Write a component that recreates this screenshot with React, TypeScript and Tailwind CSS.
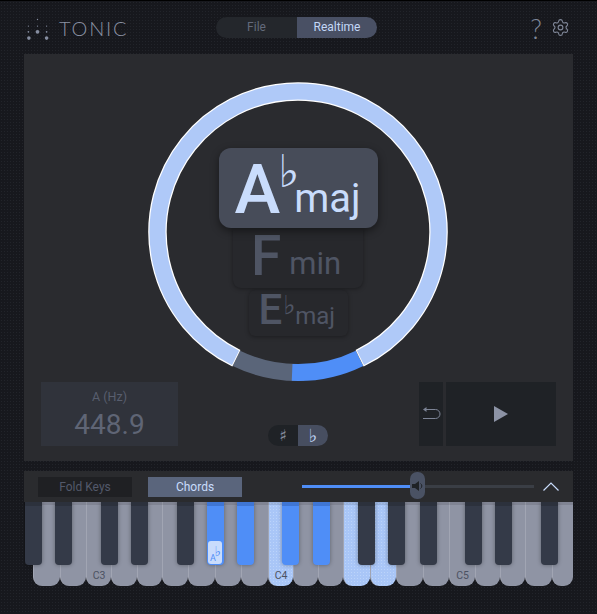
import React from "react";

const whiteWidths = [27, 26, 25, 26, 25, 26, 27, 26, 27, 25, 25, 25, 27, 26, 27, 26, 26, 25, 25, 27, 21];
const whiteLabels: Record<number, string> = { 2: "C3", 9: "C4", 16: "C5" };
const whiteActive = [9, 12, 13];
const blackKeys: [number, boolean][] = [
  [25, false], [55, false], [101, false], [131, false], [177, false], [207, true], [237, true], [282, true], [313, true],
  [358, false], [388, false], [420, false], [465, false], [495, false], [541, false],
];

function polar(deg: number, r = 140.5) {
  const a = (deg * Math.PI) / 180;
  return [150 + r * Math.sin(a), 150 + r * Math.cos(a)];
}
function arc(from: number, to: number) {
  const [x1, y1] = polar(from);
  const [x2, y2] = polar(to);
  const large = Math.abs(to - from) > 180 ? 1 : 0;
  return `M${x1} ${y1}A140.5 140.5 0 ${large} ${to > from ? 0 : 1} ${x2} ${y2}`;
}

function Ring() {
  return (
    <svg width="300" height="300" viewBox="0 0 300 300" className="block">
      <path d={arc(-26, 2.4)} fill="none" stroke="#5a6579" strokeWidth="17" />
      <path d={arc(-2.4, 26)} fill="none" stroke="#4f8ef7" strokeWidth="17" />
      <path d={arc(26, 334)} fill="none" stroke="#ffffff" strokeWidth="18.5" />
      <path d={arc(26.4, 333.6)} fill="none" stroke="#afc9f8" strokeWidth="16" />
    </svg>
  );
}

function Flat({ className }: { className: string }) {
  return <span className={`font-['DejaVu_Sans',sans-serif] leading-none ${className}`}>♭</span>;
}

export default function App() {
  return (
    <div className="w-[597px] h-[614px] overflow-hidden bg-[#17181d] bg-[radial-gradient(#22242a_1px,transparent_1px)] bg-[size:3px_3px] border-t border-black font-['Roboto',sans-serif] text-[12px]">
      <header className="h-[53px] px-[24px] flex items-center relative">
        <div className="flex items-center gap-[10px] w-[192px] pl-[2px]">
          <svg width="23" height="24" viewBox="0 0 24 24" className="text-[#868da0]" fill="currentColor">
            <circle cx="12" cy="3" r="0.7" />
            <circle cx="2.5" cy="10" r="0.7" /><circle cx="12" cy="10" r="0.7" /><circle cx="21.5" cy="10" r="0.7" />
            <circle cx="2.5" cy="16" r="0.9" /><circle cx="12" cy="16" r="2" /><circle cx="21.5" cy="16" r="0.9" />
            <circle cx="3" cy="22.5" r="1.9" /><circle cx="21.5" cy="22.5" r="1.9" />
          </svg>
          <span className="font-['Lato',sans-serif] font-light text-[20px] tracking-[1.8px] text-[#8a91a3] leading-none">TONIC</span>
        </div>
        <div className="flex h-[21px] w-[161px] leading-[21px] text-center">
          <div className="w-[81px] rounded-l-full bg-[#24272c] text-[#636a7b]">File</div>
          <div className="w-[80px] rounded-r-full bg-[#495064] text-[#c3d7f7]">Realtime</div>
        </div>
        <div className="ml-auto flex items-center gap-[9px] pr-[3px]">
          <span className="font-['Lato',sans-serif] font-light text-[27px] leading-none text-[#7f8697] mt-[1px]">?</span>
          <svg width="19" height="19" viewBox="0 0 24 24" fill="none" stroke="#7f8697" strokeWidth="1.4" strokeLinecap="round" strokeLinejoin="round">
            <path d="M9.671 4.136a2.34 2.34 0 0 1 4.659 0 2.34 2.34 0 0 0 3.319 1.915 2.34 2.34 0 0 1 2.33 4.033 2.34 2.34 0 0 0 0 3.831 2.34 2.34 0 0 1-2.33 4.033 2.34 2.34 0 0 0-3.319 1.915 2.34 2.34 0 0 1-4.659 0 2.34 2.34 0 0 0-3.32-1.915 2.34 2.34 0 0 1-2.33-4.033 2.34 2.34 0 0 0 0-3.831A2.34 2.34 0 0 1 6.35 6.051a2.34 2.34 0 0 0 3.319-1.915" />
            <circle cx="12" cy="12" r="3" />
          </svg>
        </div>
      </header>

      <main className="mx-[24px] w-[549px] h-[407px] bg-[#2a2b2f] pt-[28px] px-[17px]">
        <div className="relative w-[300px] h-[300px] ml-[107px]">
          <Ring />
          <div className="absolute inset-x-0 top-[66px] flex flex-col items-center">
            <div className="relative z-20 w-[159px] h-[80px] rounded-[12px] bg-[#474c59] shadow-[0_3px_8px_rgba(0,0,0,0.45)] text-[#c9dcfc] flex items-start pl-[16px]">
              <span className="font-medium text-[69px] leading-[80px] mt-[2px]">A</span>
              <Flat className="text-[45px] mt-[1px] w-[14px] ml-[-2px] mr-[2px]" />
              <span className="text-[40px] leading-none mt-[31px]">maj</span>
            </div>
            <div className="relative z-10 w-[130px] h-[60px] rounded-b-[8px] bg-[#27282c] shadow-[0_1px_4px_rgba(0,0,0,0.35)] text-[#4f5564] flex items-start pl-[18px]">
              <span className="font-medium text-[55px] leading-[60px] mt-[-2px]">F</span>
              <span className="text-[31px] leading-none mt-[20px] ml-[8px]">min</span>
            </div>
            <div className="mt-[2px] w-[99px] h-[46px] rounded-[6px] bg-[#27282c] shadow-[0_1px_4px_rgba(0,0,0,0.35)] text-[#4f5564] flex items-start pl-[10px]">
              <span className="font-medium text-[42px] leading-[46px] mt-[-3px]">E</span>
              <Flat className="text-[26px] mt-[2px] w-[13px] pl-[1px]" />
              <span className="text-[24px] leading-none mt-[14px]">maj</span>
            </div>
          </div>
        </div>

        <div className="h-[64px] flex items-end">
          <div className="w-[137px] h-[64px] bg-[#30333b] flex flex-col items-center text-[#585e6e]">
            <span className="text-[12.5px] leading-none mt-[9px]">A (Hz)</span>
            <span className="text-[28px] leading-none mt-[7px] text-[#5f6575]">448.9</span>
          </div>
          <div className="ml-[90px] w-[60px] h-[21px] flex">
            <div className="w-[30px] rounded-l-full bg-[#1f2226] text-[#8a91a3] flex items-center justify-center">
              <span className="font-['DejaVu_Sans',sans-serif] text-[16px] leading-none">♯</span>
            </div>
            <div className="w-[30px] rounded-r-full bg-[#474e60] text-[#c3d7f7] flex items-center justify-center">
              <span className="font-['DejaVu_Sans',sans-serif] text-[18px] leading-none">♭</span>
            </div>
          </div>
          <div className="ml-[91px] w-[24px] h-[64px] bg-[#1f2226] flex items-center justify-center">
            <svg width="20" height="16" viewBox="0 0 20 16" fill="none" stroke="#7d8496" strokeWidth="1">
              <path d="M5 3.5h9.5a4.5 4.5 0 0 1 0 9H2" />
              <path d="M5.5 1v5L2 3.5z" fill="#7d8496" stroke="none" />
            </svg>
          </div>
          <div className="ml-[3px] w-[110px] h-[64px] bg-[#1f2226] flex items-center justify-center">
            <svg width="14" height="16" viewBox="0 0 14 16"><path d="M0 0l14 8L0 16z" fill="#8c93a5" /></svg>
          </div>
        </div>
      </main>

      <section className="mx-[24px] mt-[10px] w-[549px]">
        <div className="h-[31px] bg-[#2a2b2e] relative flex items-center pl-[14px] text-[12px]">
          <div className="w-[94px] h-[20px] bg-[#1f2023] text-[#53596a] text-center leading-[20px]">Fold Keys</div>
          <div className="ml-[16px] w-[94px] h-[20px] bg-[#5a657c] text-[#c9dcfc] text-center leading-[20px]">Chords</div>
          <div className="ml-[60px] w-[232px] h-[3px] bg-[#3a3e45] relative">
            <div className="w-[110px] h-[3px] bg-[#4f8ef7]" />
            <div className="absolute left-[108px] top-[-13px] w-[15px] h-[27px] rounded-[7px] bg-[#4a5264] flex items-center justify-center">
              <svg width="11" height="10" viewBox="0 0 11 10"><path d="M0 3h3l4-3v10L3 7H0z" fill="#1f2226" /><path d="M8.5 2.5a3 3 0 0 1 0 5" stroke="#1f2226" fill="none" /></svg>
            </div>
          </div>
          <svg width="16" height="9" viewBox="0 0 16 9" className="ml-[9px]" fill="none" stroke="#c9dcfc" strokeWidth="1.2"><path d="M0.5 8.5L8 1l7.5 7.5" /></svg>
        </div>

        <div className="relative h-[84px] overflow-hidden">
          <div className="ml-[9px] h-full grid grid-cols-[27px_26px_25px_26px_25px_26px_27px_26px_27px_25px_25px_25px_27px_26px_27px_26px_26px_25px_25px_27px_21px]">
            {whiteWidths.map((_, i) => {
              const active = whiteActive.includes(i);
              return (
                <div key={i} className={`h-full rounded-b-[9px] border-l border-[#a1a5b3] flex items-end justify-center pb-[2px] text-[10.5px] text-[#4c5262] ${active ? "bg-[#a9c6f7] bg-[radial-gradient(#bcd4fa_1px,transparent_1px)] bg-[size:3px_3px] border-[#4f8ef7]" : "bg-[#8f94a4]"}`}>
                  {whiteLabels[i]}
                </div>
              );
            })}
          </div>
          <div className="absolute inset-x-0 top-0 h-[3px] bg-black/10" />
          {blackKeys.map(([x, active]) => (
            <div key={x} style={{ left: x - 24 }} className={`absolute top-0 w-[17px] h-[63px] rounded-b-[4px] border-t-[4px] shadow-[0_0_4px_rgba(0,0,0,0.35)] ${active ? "bg-[#4f8ef7] border-[#3f76d4]" : "bg-[#343a48] border-[#2c313c]"}`}>
              {x === 207 && (
                <div className="absolute left-[1px] top-[35px] w-[14px] h-[23px] rounded-[3px] bg-[#c9dcfc] text-[#4f8ef7] text-[9px] leading-none">
                  <span className="absolute left-[2px] bottom-[1px]">A</span>
                  <span className="absolute right-[1px] top-[3px] text-[14px] font-['DejaVu_Sans',sans-serif]">♭</span>
                </div>
              )}
            </div>
          ))}
        </div>
      </section>
    </div>
  );
}
